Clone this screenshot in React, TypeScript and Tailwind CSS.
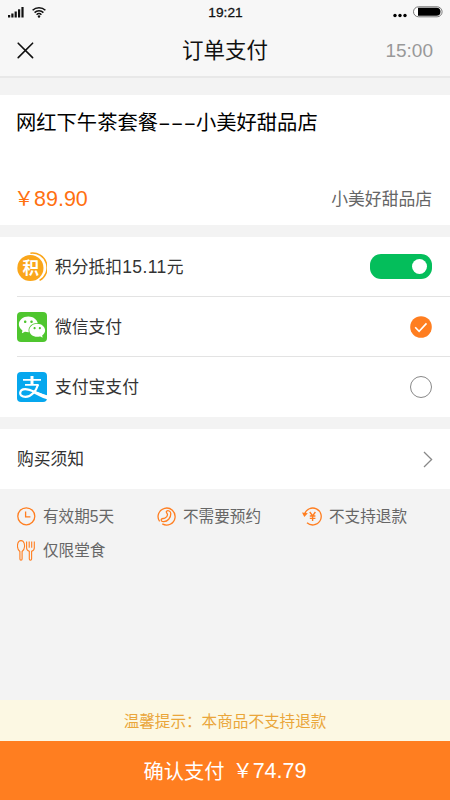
import type { ReactNode } from "react";
import { AiFillWechat } from "react-icons/ai";

// -----------------------------------------------------------------------------------

const STROKE = "#ff7e20";

const SHOP_NAME = "小美好甜品店";

// -----------------------------------------------------------------------------------

function StatusBar() {
  return (
    <div className="flex h-6 items-center justify-between pl-2 pr-[7px]">
      <div className="flex w-24 items-center gap-2">
        <svg width="16" height="12" viewBox="0 0 16 12" fill="#111">
          <rect x="0" y="9" width="2.2" height="2.5" />
          <rect x="3.3" y="7.5" width="2.2" height="4" />
          <rect x="6.6" y="5.5" width="2.2" height="6" />
          <rect x="10" y="3.3" width="2.2" height="8.2" />
          <rect x="13.4" y="1" width="2.2" height="10.5" />
        </svg>
        <svg width="14" height="12" viewBox="0 0 14 12" fill="none" stroke="#111" strokeWidth="1.5">
          <path d="M.6 4.3a9 9 0 0 1 12.8 0" />
          <path d="M2.6 6.6a6.2 6.2 0 0 1 8.8 0" />
          <path d="M4.6 8.7a3.4 3.4 0 0 1 4.8 0" />
          <circle cx="7" cy="10.5" r="1.2" fill="#111" stroke="none" />
        </svg>
      </div>
      <span className="pt-0.5 text-[13.7px] text-[#111] [-webkit-text-stroke:0.3px_#111]">19:21</span>
      <div className="flex w-24 items-center justify-end gap-[6px]">
        <svg width="14" height="12" viewBox="0 0 14 12" fill="#000">
          <circle cx="2" cy="9.5" r="1.7" />
          <circle cx="7" cy="9.5" r="1.7" />
          <circle cx="12" cy="9.5" r="1.7" />
        </svg>
        <svg width="30" height="12" viewBox="0 0 30 12">
          <rect x=".5" y=".8" width="28.6" height="10" rx="5" fill="#fff" stroke="#777" />
          <path d="M5 1.8h18.5a4 4 0 0 1 0 8H5z" fill="#000" />
        </svg>
      </div>
    </div>
  );
}

function PayRow({ icon, label, action, last }: { icon: ReactNode; label: ReactNode; action: ReactNode; last?: boolean }) {
  return (
    <div className={`ml-[17px] flex h-[60px] items-center pr-[18px] ${last ? "" : "border-b border-[#e3e3e3]"}`}>
      <div className="mr-2 flex size-[30px] items-center justify-center">{icon}</div>
      <span className="flex-1 pt-[3px] text-[16.8px] text-[#333]">{label}</span>
      {action}
    </div>
  );
}

function Note({ icon, label, className }: { icon: ReactNode; label: ReactNode; className?: string }) {
  return (
    <div className={`flex h-[34px] items-center gap-[7px] ${className ?? ""}`}>
      {icon}
      <span className="whitespace-nowrap pt-0.5 text-[15.6px] text-[#666]">{label}</span>
    </div>
  );
}

// -----------------------------------------------------------------------------------

export default function App() {
  return (
    <div className="flex h-[800px] w-[450px] flex-col bg-[#f3f3f3] font-['Liberation_Sans','Noto_Sans_CJK_SC',sans-serif] leading-none">
      {/* Header */}
      <header className="h-[78px] border-b-2 border-[#e8e8e8] bg-[#f7f7f7]">
        <StatusBar />
        <div className="flex h-[53px] items-center justify-between pl-[17px] pr-[17px]">
          <div className="w-20">
            <svg width="17" height="17" viewBox="0 0 17 17" stroke="#111" strokeWidth="1.6" strokeLinecap="round">
              <path d="M1.2 1.2 15.6 15.6M15.6 1.2 1.2 15.6" />
            </svg>
          </div>
          <h1 className="pt-[3px] text-[21.5px] text-[#111]">订单支付</h1>
          <span className="w-20 text-right text-[19px] text-[#999]">15:00</span>
        </div>
      </header>

      {/* Order */}
      <section className="mt-[17px] flex h-[130px] flex-col justify-between bg-white pb-[13px] pl-4 pr-[18px] pt-[18px]">
        <h2 className="flex items-center text-[20.3px] text-black">
          网红下午茶套餐
          <span className="inline-block w-[38px] whitespace-nowrap">
            <span className="inline-block origin-left scale-x-[1.88]">---</span>
          </span>
          {SHOP_NAME}
        </h2>
        <div className="flex items-center justify-between">
          <span className="flex items-center text-[21.5px] text-[#ff7010]">
            <span className="-ml-0.5 mb-1 w-5 font-['Noto_Sans_CJK_SC'] text-[20px]">￥</span>
            89.90
          </span>
          <span className="text-[16.8px] text-[#666]">{SHOP_NAME}</span>
        </div>
      </section>

      {/* Payment methods */}
      <section className="mt-3 bg-white">
        <PayRow
          icon={
            <div className="relative size-[30px]">
              <svg width="30" height="30" viewBox="0 0 30 30" fill="none">
                <circle cx="13.4" cy="16" r="13.1" fill="#faa61a" />
                <path d="M13.4 1.2A14.6 14.6 0 0 1 22.6 28.4" stroke="#faa61a" strokeWidth="1.5" />
              </svg>
              <span className="absolute left-[5.5px] top-[7px] font-['Noto_Sans_CJK_SC'] text-[16.5px] font-bold leading-4 text-white">
                积
              </span>
            </div>
          }
          label={
            <>
              积分抵扣<span className="text-[17.5px] tracking-[0.4px]">15.11</span>元
            </>
          }
          action={
            <div className="flex h-[25px] w-[62px] items-center justify-end rounded-[11px] bg-[#04be5b] pr-[5px]">
              <div className="size-[15px] rounded-full bg-white" />
            </div>
          }
        />
        <PayRow
          icon={
            <div className="flex size-[30px] items-center justify-center rounded-[4px] bg-[#4fc62f]">
              <AiFillWechat className="size-[30px] shrink-0 text-white" />
            </div>
          }
          label="微信支付"
          action={
            <svg width="22" height="22" viewBox="0 0 22 22" fill="none">
              <circle cx="11" cy="11" r="10.8" fill={STROKE} />
              <path d="m5.2 11.3 3.9 4L16.5 7.4" stroke="#fff" strokeWidth="1.6" />
            </svg>
          }
        />
        <PayRow
          last
          icon={
            <svg width="30" height="30" viewBox="0 0 30 30" fill="none">
              <rect width="30" height="30" rx="4" fill="#06a7ee" />
              <path d="M6 7.8h18M8 12.8h13.6" stroke="#fff" strokeWidth="1.7" />
              <path d="M15 4v9" stroke="#fff" strokeWidth="3" />
              <path
                d="M21 12.8c-1.6 5.6-6.6 12-12.6 12.1-3.6 0-5.4-1.9-5.2-4 .2-2.4 2.4-3.7 5-3.7 4.8 0 10.4 3.6 21.8 7.6"
                stroke="#fff"
                strokeWidth="2.2"
              />
              <path d="M16.5 18.6c4 1.7 8.5 3.5 13.5 4.7v4c-5.5-1.8-10-4.3-14.5-6.6z" fill="#fff" />
            </svg>
          }
          label="支付宝支付"
          action={<div className="size-[22px] rounded-full border border-[#888]" />}
        />
      </section>

      {/* Purchase notes */}
      <section className="mt-3 flex h-[60px] items-center justify-between bg-white pl-[17px] pr-[17px]">
        <span className="pt-[3px] text-[16.8px] text-[#333]">购买须知</span>
        <svg width="10" height="17" viewBox="0 0 10 17" fill="none" stroke="#888" strokeWidth="1.3">
          <path d="m1 1 7.6 7.5L1 16" />
        </svg>
      </section>

      <section className="flex flex-1 flex-wrap content-start pl-[17px] pt-[10px]">
        <Note
          className="w-[140px]"
          icon={
            <svg width="19" height="19" viewBox="0 0 19 19" fill="none" stroke={STROKE} strokeWidth="1.3">
              <circle cx="9.3" cy="9.3" r="8.5" />
              <path d="M8.6 4.5v5.4h4.8" />
            </svg>
          }
          label="有效期5天"
        />
        <Note
          className="w-[145px]"
          icon={
            <svg width="19" height="19" viewBox="0 0 19 19" fill="none" stroke={STROKE} strokeWidth="1.3">
              <path d="M2.6 14.4A8.5 8.5 0 1 1 5.3 16.9" />
              <path d="M9.4 4.4c1.4-1.4 4.4-.5 4.4 2.3 0 4.3-3.2 7.7-7 8-2.200.1-3.300-1.500-2.200-2.700.8-.8 2.100-.2 3.200-.8 1.500-.7 2.600-2 2.700-3.500.1-1.200-1.900-2.400-1.100-3.300z" />
            </svg>
          }
          label="不需要预约"
        />
        <Note
          icon={
            <svg width="20" height="19" viewBox="0 0 20 19" fill="none" stroke={STROKE} strokeWidth="1.3">
              <path d="M2.6 7A8.5 8.5 0 1 1 5 15.8" />
              <path d="m0 5.5 5.8.8L2.3 10z" fill={STROKE} stroke="none" />
              <path d="m7.8 5 2.8 3.8L13.4 5M10.6 8.8V14M7.8 9h5.6M7.8 11.4h5.6" strokeWidth="1.4" />
            </svg>
          }
          label="不支持退款"
        />
        <Note
          className="w-[140px]"
          icon={
            <svg width="19" height="21" viewBox="0 0 19 21" fill="none" stroke={STROKE} strokeWidth="1.1">
              <path d="M2.9 11.5C-.2 9.4-.1 3.6 1.9 1.4c1-1.1 3.2-1.1 4.2 0 2.1 2.3 2.1 8-1 10.1v7.6c0 1.4-2.2 1.4-2.2 0z" />
              <path d="M9.6 1.5V8c0 1.8 1.3 2.8 2.7 3.2v7.9c0 1.4 2.3 1.4 2.3 0v-7.9C16 10.8 17.3 9.8 17.3 8V1.5M12.2 1.5v6.2M14.7 1.5v6.2" />
            </svg>
          }
          label="仅限堂食"
        />
      </section>

      {/* Footer */}
      <div className="flex h-[41px] items-center justify-center bg-[#fcf8e3] pt-0.5 text-[15.6px] text-[#eaa63a]">
        温馨提示：本商品不支持退款
      </div>
      <button className="flex h-[59px] items-center justify-center bg-[#ff7e20] pt-[3px] text-[20.3px] text-white">
        确认支付
        <span className="mb-1 ml-2 w-5 font-['Noto_Sans_CJK_SC'] text-[20px]">￥</span>
        <span className="text-[21.5px]">74.79</span>
      </button>
    </div>
  );
}
